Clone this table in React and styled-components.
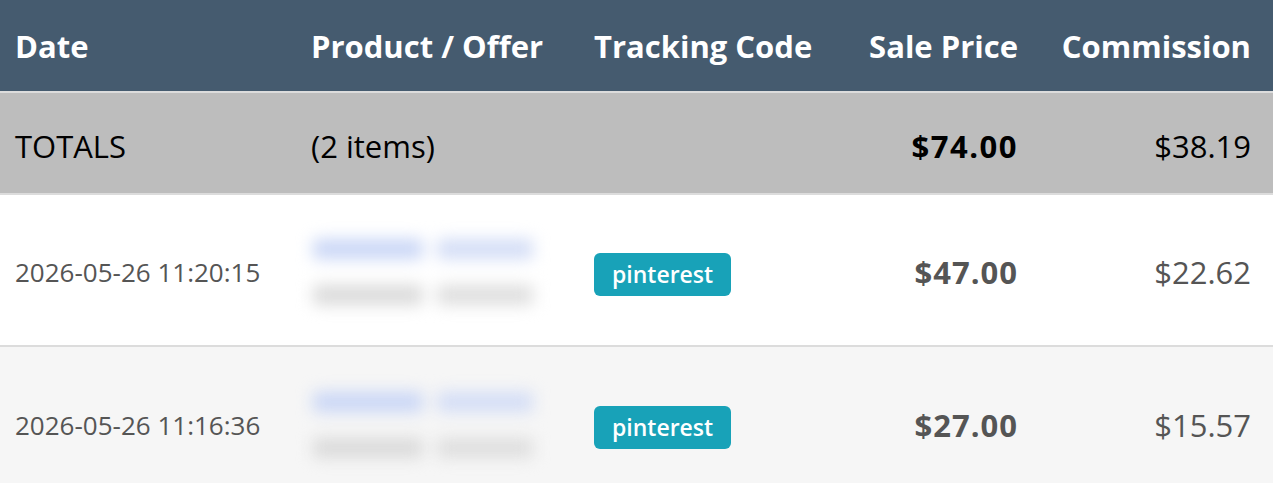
import React from "react";
import styled, { createGlobalStyle } from "styled-components";

const Global = createGlobalStyle`
  html, body { margin: 0; padding: 0; background: #fff; }
  body { font-family: "Open Sans", "Noto Sans", sans-serif; }
`;

const Table = styled.div`
  width: 1273px;
  display: grid;
  grid-template-columns: 296px 283px 246px 208px 240px;
`;

const Row = styled.div`
  display: contents;
`;

const Cell = styled.div`
  display: flex;
  align-items: center;
  justify-content: ${(p) => (p.$right ? "flex-end" : "flex-start")};
  height: ${(p) => p.$h}px;
  padding: ${(p) => (p.$right ? `0 ${p.$pr ?? 22}px 0 0` : "0 0 0 15px")};
  padding-top: ${(p) => p.$pt || 0}px;
  background: ${(p) => p.$bg};
  border-bottom: ${(p) => (p.$line ? "2px solid #dcdcdc" : "none")};
  box-sizing: border-box;
  white-space: nowrap;
  font-size: ${(p) => p.$size}px;
  font-weight: ${(p) => p.$weight || 400};
  letter-spacing: ${(p) => p.$ls || 0}px;
  color: ${(p) => p.$color};
`;

const Badge = styled.span`
  display: inline-flex;
  align-items: center;
  height: 43px;
  padding: 0 18px;
  margin-top: 4px;
  border-radius: 6px;
  background: #18a2b8;
  color: #fff;
  font-size: 23px;
  font-weight: 600;
  letter-spacing: 0;
`;

const Blurred = styled.div`
  display: flex;
  flex-direction: column;
  gap: 26px;
  padding: 14px 10px;
  width: 247px;
  box-sizing: border-box;
  margin-left: -8px;
  filter: blur(8px);
`;

const BlurLine = styled.div`
  display: flex;
  gap: 14px;
`;

const BlurWord = styled.div`
  height: 20px;
  width: ${(p) => p.$w}px;
  background: ${(p) => p.$c};
  border-radius: 4px;
`;

const head = { $bg: "#455b6f", $h: 93, $size: 31, $weight: 700, $color: "#fff", $line: true };
const tot = { $bg: "#bdbdbd", $h: 102, $size: 31, $color: "#000", $line: true, $pt: 6 };

const rows = [
  { date: "2026-05-26 11:20:15", price: "$47.00", comm: "$22.62", bg: "#ffffff" },
  { date: "2026-05-26 11:16:36", price: "$27.00", comm: "$15.57", bg: "#f6f6f6" },
];

export default function App() {
  return (
    <>
      <Global />
      <Table>
        <Row>
          <Cell {...head}>Date</Cell>
          <Cell {...head}>Product / Offer</Cell>
          <Cell {...head}>Tracking Code</Cell>
          <Cell {...head} $right $pr={15}>Sale Price</Cell>
          <Cell {...head} $right>Commission</Cell>
        </Row>
        <Row>
          <Cell {...tot}>TOTALS</Cell>
          <Cell {...tot}>(2 items)</Cell>
          <Cell {...tot}></Cell>
          <Cell {...tot} $right $pr={15} $weight={700} $ls={1.5}>$74.00</Cell>
          <Cell {...tot} $right>$38.19</Cell>
        </Row>
        {rows.map((r, i) => {
          const base = { $bg: r.bg, $h: 152, $line: i === 0, $color: "#555", $pt: 4 };
          return (
            <Row key={i}>
              <Cell {...base} $size={26}>{r.date}</Cell>
              <Cell {...base}>
                <Blurred>
                  <BlurLine>
                    <BlurWord $w={110} $c="#c9d6f6" />
                    <BlurWord $w={96} $c="#d3ddf6" />
                  </BlurLine>
                  <BlurLine>
                    <BlurWord $w={110} $c="#dadada" />
                    <BlurWord $w={96} $c="#dedede" />
                  </BlurLine>
                </Blurred>
              </Cell>
              <Cell {...base}>
                <Badge>pinterest</Badge>
              </Cell>
              <Cell {...base} $right $pr={15} $size={31} $weight={700} $ls={1}>{r.price}</Cell>
              <Cell {...base} $right $size={31}>{r.comm}</Cell>
            </Row>
          );
        })}
      </Table>
    </>
  );
}
